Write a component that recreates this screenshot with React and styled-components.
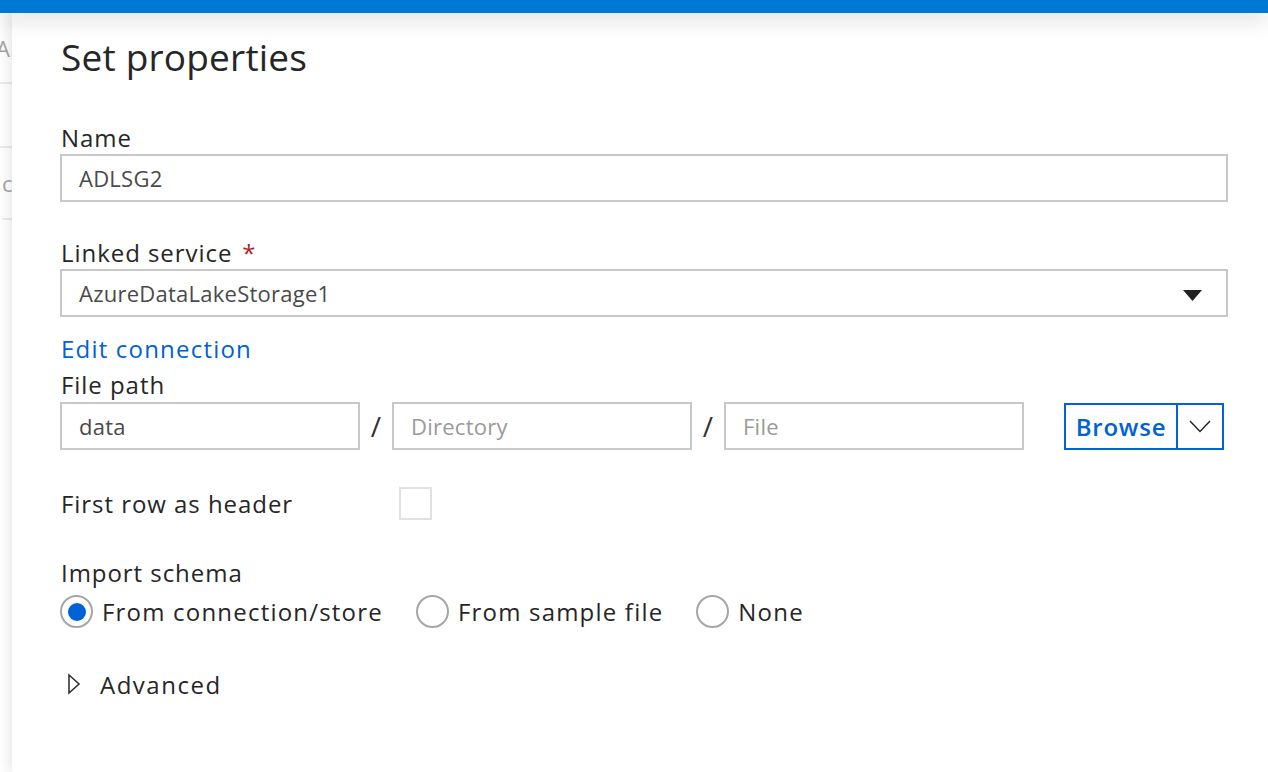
import React from "react";
import styled, { createGlobalStyle } from "styled-components";

const GlobalStyle = createGlobalStyle`
  html, body { margin: 0; padding: 0; background: #fff; }
  body { font-family: "Open Sans", "Noto Sans", sans-serif; color: #262626; }
  * { box-sizing: border-box; }
`;

const Page = styled.div`
  width: 1268px;
  height: 772px;
  overflow: hidden;
  display: flex;
  flex-direction: column;
  background: #fff;
`;

const TopBar = styled.div`
  height: 13px;
  flex: none;
  background: #0078d4;
  position: relative;
  z-index: 3;
  box-shadow: 0 6px 22px rgba(0, 0, 0, 0.16);
`;

const Body = styled.div`
  flex: 1;
  display: flex;
  min-height: 0;
`;

const BackStrip = styled.div`
  width: 12px;
  flex: none;
  overflow: hidden;
  display: flex;
  flex-direction: column;
  color: #a6a6a6;
  font-size: 22px;
`;

const StripCell = styled.div`
  height: ${(p) => p.$h}px;
  border-bottom: ${(p) => (p.$line ? "2px solid #ececec" : "none")};
  display: flex;
  align-items: center;
  white-space: nowrap;
  margin-left: ${(p) => p.$shift || 0}px;
`;

const Panel = styled.div`
  flex: 1;
  position: relative;
  z-index: 2;
  background: #fff;
  box-shadow: -4px 0 12px rgba(0, 0, 0, 0.09);
  padding: 20px 40px 0 48px;
  display: flex;
  flex-direction: column;
`;

const Title = styled.h1`
  margin: 0 0 0 1px;
  font-size: 37px;
  letter-spacing: 0.2px;
  font-weight: 400;
  line-height: 48px;
  color: #262626;
`;

const Label = styled.div`
  margin: ${(p) => p.$mt || 0}px 0 0 1px;
  font-size: 24px;
  letter-spacing: 0.95px;
  line-height: 31px;
  color: #262626;
`;

const Required = styled.span`
  color: #a4262c;
  margin-left: 10px;
`;

const TextBox = styled.div`
  height: 48px;
  width: ${(p) => (p.$w ? `${p.$w}px` : "100%")};
  flex: none;
  margin-top: ${(p) => p.$mt || 0}px;
  border: 2px solid #c8c8c8;
  display: flex;
  align-items: center;
  justify-content: space-between;
  padding: 0 24px 0 17px;
  font-size: 22px;
  letter-spacing: 0.25px;
  color: ${(p) => (p.$placeholder ? "#9a9a9a" : "#4a4a4a")};
`;

const Caret = styled.svg`
  width: 19px;
  height: 11px;
  margin-top: 4px;
`;

const Link = styled.a`
  margin: 16px 0 0 1px;
  font-size: 24px;
  letter-spacing: 1.2px;
  line-height: 31px;
  color: #0062d6;
  text-decoration: none;
`;

const PathRow = styled.div`
  margin-top: 2px;
  display: flex;
  align-items: center;
`;

const Slash = styled.span`
  width: 32px;
  text-align: center;
  font-size: 28px;
  color: #333;
`;

const BrowseButton = styled.div`
  margin-left: 40px;
  height: 47px;
  width: 160px;
  border: 2px solid #0062d6;
  display: flex;
  align-items: stretch;
  color: #0062d6;
`;

const BrowseLabel = styled.span`
  flex: 1;
  display: flex;
  align-items: center;
  justify-content: center;
  font-size: 24px;
  letter-spacing: 0.8px;
  font-weight: 600;
  border-right: 2px solid #0062d6;
`;

const BrowseChevron = styled.span`
  width: 44px;
  display: flex;
  align-items: center;
  justify-content: center;
`;

const CheckRow = styled.div`
  margin-top: 37px;
  display: flex;
  align-items: center;
  height: 33px;
`;

const CheckLabel = styled.span`
  width: 338px;
  margin-left: 1px;
  font-size: 24px;
  letter-spacing: 0.95px;
  color: #262626;
`;

const Checkbox = styled.span`
  width: 33px;
  height: 33px;
  border: 2px solid #e1e1e1;
`;

const RadioGroup = styled.div`
  margin-top: 7px;
  display: flex;
  align-items: center;
  gap: 33px;
`;

const RadioItem = styled.label`
  display: flex;
  align-items: center;
  gap: 9px;
  font-size: 24px;
  letter-spacing: 1.2px;
  color: #262626;
`;

const RadioCircle = styled.span`
  width: 33px;
  height: 33px;
  border-radius: 50%;
  border: 2px solid #a6a6a6;
  display: flex;
  align-items: center;
  justify-content: center;
  &::after {
    content: "";
    width: 18px;
    height: 18px;
    border-radius: 50%;
    background: ${(p) => (p.$checked ? "#0062d6" : "transparent")};
  }
`;

const AdvancedRow = styled.div`
  margin-top: 40px;
  display: flex;
  align-items: center;
  height: 32px;
  font-size: 24px;
  letter-spacing: 1.5px;
  color: #262626;
`;

const Triangle = styled.svg`
  width: 14px;
  height: 22px;
  margin: 0 19px 0 7px;
`;

export default function App() {
  return (
    <>
      <GlobalStyle />
      <Page>
        <TopBar />
        <Body>
          <BackStrip>
            <StripCell $h={71} $line $shift={-4}>
              AI
            </StripCell>
            <StripCell $h={64} $line />
            <StripCell $h={72} $line $shift={2}>
              c
            </StripCell>
          </BackStrip>
          <Panel>
            <Title>Set properties</Title>
            <Label $mt={41}>Name</Label>
            <TextBox $mt={1}>ADLSG2</TextBox>
            <Label $mt={35}>
              Linked service<Required>*</Required>
            </Label>
            <TextBox $mt={1}>
              AzureDataLakeStorage1
              <Caret viewBox="0 0 19 11">
                <path d="M0 0 L19 0 L9.5 11 Z" fill="#222" />
              </Caret>
            </TextBox>
            <Link href="#">Edit connection</Link>
            <Label $mt={5}>File path</Label>
            <PathRow>
              <TextBox $w={300}>data</TextBox>
              <Slash>/</Slash>
              <TextBox $w={300} $placeholder>
                Directory
              </TextBox>
              <Slash>/</Slash>
              <TextBox $w={300} $placeholder>
                File
              </TextBox>
              <BrowseButton>
                <BrowseLabel>Browse</BrowseLabel>
                <BrowseChevron>
                  <svg width="22" height="13" viewBox="0 0 22 13">
                    <path d="M1 1 L11 11.5 L21 1" fill="none" stroke="#222" strokeWidth="1.4" />
                  </svg>
                </BrowseChevron>
              </BrowseButton>
            </PathRow>
            <CheckRow>
              <CheckLabel>First row as header</CheckLabel>
              <Checkbox />
            </CheckRow>
            <Label $mt={37}>Import schema</Label>
            <RadioGroup>
              <RadioItem>
                <RadioCircle $checked />
                From connection/store
              </RadioItem>
              <RadioItem>
                <RadioCircle />
                From sample file
              </RadioItem>
              <RadioItem>
                <RadioCircle />
                None
              </RadioItem>
            </RadioGroup>
            <AdvancedRow>
              <Triangle viewBox="0 0 14 22">
                <path d="M2 2 L12 11 L2 20 Z" fill="none" stroke="#333" strokeWidth="1.6" strokeLinejoin="miter" />
              </Triangle>
              Advanced
            </AdvancedRow>
          </Panel>
        </Body>
      </Page>
    </>
  );
}
